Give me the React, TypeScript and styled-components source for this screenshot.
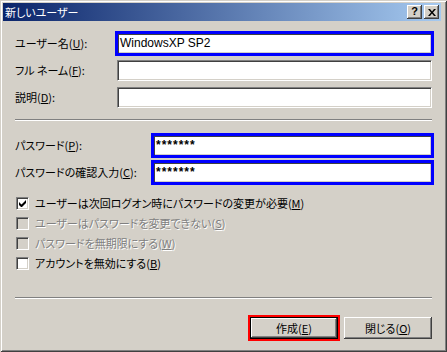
import styled, { createGlobalStyle } from 'styled-components'

const GlobalStyle = createGlobalStyle`
	html, body {
		margin: 0;
		padding: 0;
		background: #d4d0c8;
	}
	body {
		font-family: "Noto Sans CJK JP", "Noto Sans", sans-serif;
		font-size: 11px;
		font-feature-settings: 'palt';
		color: #000;
	}
`

type FieldRow = { label: string; key: string; value?: string; highlight?: boolean }

const nameFields: FieldRow[] = [
	{ label: 'ユーザー名', key: 'U', value: 'WindowsXP SP2', highlight: true },
	{ label: 'フル ネーム', key: 'F' },
	{ label: '説明', key: 'D' },
]

const passwordFields: FieldRow[] = [
	{ label: 'パスワード', key: 'P', value: '*******', highlight: true },
	{ label: 'パスワードの確認入力', key: 'C', value: '*******', highlight: true },
]

const options = [
	{ text: 'ユーザーは次回ログオン時にパスワードの変更が必要', key: 'M', checked: true, disabled: false },
	{ text: 'ユーザーはパスワードを変更できない', key: 'S', checked: false, disabled: true },
	{ text: 'パスワードを無期限にする', key: 'W', checked: false, disabled: true },
	{ text: 'アカウントを無効にする', key: 'B', checked: false, disabled: false },
]

function Mnemonic({ text, k, colon }: { text: string; k: string; colon?: boolean }) {
	return (
		<>
			{text}(<Key>{k}</Key>){colon ? ':' : ''}
		</>
	)
}

export default function App() {
	return (
		<>
			<GlobalStyle />
			<Window>
				<TitleBar>
					<TitleText>新しいユーザー</TitleText>
					<CaptionButton>
						<Help>?</Help>
					</CaptionButton>
					<CaptionButton>
						<svg width="8" height="7" viewBox="0 0 8 7">
							<path d="M0 0h2l2 2.5L6 0h2L5 3.5 8 7H6L4 4.5 2 7H0l3-3.5z" fill="#000" />
						</svg>
					</CaptionButton>
				</TitleBar>
				<Body>
					<FieldGrid labelWidth={102}>
						{nameFields.map((f) => (
							<Row key={f.key}>
								<Label>
									<Mnemonic text={f.label} k={f.key} colon />
								</Label>
								<TextBox highlight={f.highlight}>{f.value}</TextBox>
							</Row>
						))}
					</FieldGrid>
					<Separator top={11} bottom={14} />
					<FieldGrid labelWidth={138}>
						{passwordFields.map((f) => (
							<Row key={f.key}>
								<Label>
									<Mnemonic text={f.label} k={f.key} colon />
								</Label>
								<TextBox highlight={f.highlight} secret>
									{f.value}
								</TextBox>
							</Row>
						))}
					</FieldGrid>
					<CheckList>
						{options.map((o) => (
							<CheckRow key={o.key} disabled={o.disabled}>
								<CheckBox disabled={o.disabled}>
									{o.checked && (
										<svg width="7" height="7" viewBox="0 0 7 7">
											<path d="M0 2v3l2 2h1l4-4V0L2.5 4.5z" fill="#000" />
										</svg>
									)}
								</CheckBox>
								<span>
									<Mnemonic text={o.text} k={o.key} />
								</span>
							</CheckRow>
						))}
					</CheckList>
					<Separator top={24} bottom={18} />
					<ButtonRow>
						<Button isDefault>
							<Mnemonic text="作成" k="E" />
						</Button>
						<Button>
							<Mnemonic text="閉じる" k="O" />
						</Button>
					</ButtonRow>
				</Body>
			</Window>
		</>
	)
}

const Window = styled.div`
	width: 447px;
	height: 352px;
	box-sizing: border-box;
	padding: 3px;
	background: #d4d0c8;
	display: flex;
	flex-direction: column;
	box-shadow: inset 1px 1px 0 #d4d0c8, inset -1px -1px 0 #404040, inset 2px 2px 0 #fff,
		inset -2px -2px 0 #808080;
`
const TitleBar = styled.div`
	height: 18px;
	margin-right: 3px;
	display: flex;
	align-items: center;
	gap: 2px;
	padding: 0 2px 0 2px;
	background: linear-gradient(to right, #0a246a, #a6caf0);
`
const TitleText = styled.div`
	flex: 1;
	color: #fff;
	font-size: 11px;
	line-height: 18px;
	white-space: nowrap;
`
const CaptionButton = styled.div`
	width: 15px;
	height: 14px;
	box-sizing: border-box;
	display: flex;
	align-items: center;
	justify-content: center;
	background: #d4d0c8;
	box-shadow: inset -1px -1px 0 #404040, inset 1px 1px 0 #fff, inset -2px -2px 0 #808080;
`
const Help = styled.span`
	font-family: 'Liberation Sans', Arial, sans-serif;
	font-weight: bold;
	font-size: 11px;
	line-height: 11px;
	margin-top: -1px;
`
const Body = styled.div`
	flex: 1;
	padding: 12px 12px 0;
	display: flex;
	flex-direction: column;
`
const FieldGrid = styled.div<{ labelWidth: number }>`
	display: grid;
	grid-template-columns: ${(p) => p.labelWidth}px 1fr;
	grid-auto-rows: 21px;
	row-gap: 6px;
`
const Row = styled.div`
	display: contents;
`
const Label = styled.div`
	line-height: 21px;
	white-space: nowrap;
`
const Key = styled.span`
	text-decoration: underline;
	text-underline-offset: 1px;
`
const TextBox = styled.div<{ highlight?: boolean; secret?: boolean }>`
	height: 21px;
	box-sizing: border-box;
	padding: 0 1px;
	background: #fff;
	border: 1px solid;
	border-color: #808080 #fff #fff #808080;
	box-shadow: inset 1px 1px 0 #404040, inset -1px -1px 0 #d4d0c8;
	font-family: 'Liberation Sans', Arial, sans-serif;
	font-size: 12px;
	line-height: 19px;
	padding-left: 2px;
	white-space: nowrap;
	outline: ${(p) => (p.highlight ? '3px solid #0000ff' : 'none')};
	outline-offset: -1px;
	font-weight: ${(p) => (p.secret ? 'bold' : 'normal')};
	letter-spacing: ${(p) => (p.secret ? '1px' : '0')};
`
const Separator = styled.div<{ top: number; bottom: number }>`
	height: 0;
	border-top: 1px solid #808080;
	border-bottom: 1px solid #fff;
	margin: ${(p) => p.top}px 0 ${(p) => p.bottom}px;
`
const CheckList = styled.div`
	margin-top: 10px;
	display: flex;
	flex-direction: column;
`
const CheckRow = styled.div<{ disabled?: boolean }>`
	height: 20px;
	display: flex;
	align-items: center;
	gap: 6px;
	padding-left: 1px;
	white-space: nowrap;
	color: ${(p) => (p.disabled ? '#808080' : '#000')};
	text-shadow: ${(p) => (p.disabled ? '1px 1px 0 #fff' : 'none')};
`
const CheckBox = styled.div<{ disabled?: boolean }>`
	width: 13px;
	height: 13px;
	box-sizing: border-box;
	display: flex;
	align-items: center;
	justify-content: center;
	background: ${(p) => (p.disabled ? '#d4d0c8' : '#fff')};
	border: 1px solid;
	border-color: #808080 #fff #fff #808080;
	box-shadow: inset 1px 1px 0 #404040, inset -1px -1px 0 #d4d0c8;
`
const ButtonRow = styled.div`
	display: flex;
	justify-content: flex-end;
	gap: 6px;
`
const Button = styled.div<{ isDefault?: boolean }>`
	width: 88px;
	height: 22px;
	box-sizing: border-box;
	display: flex;
	align-items: center;
	justify-content: center;
	background: #d4d0c8;
	border: ${(p) => (p.isDefault ? '1px solid #000' : 'none')};
	box-shadow: inset -1px -1px 0 #404040, inset 1px 1px 0 #fff, inset -2px -2px 0 #808080;
	outline: ${(p) => (p.isDefault ? '2px solid #ff0000' : 'none')};
	font-size: 11px;
	white-space: nowrap;
`
